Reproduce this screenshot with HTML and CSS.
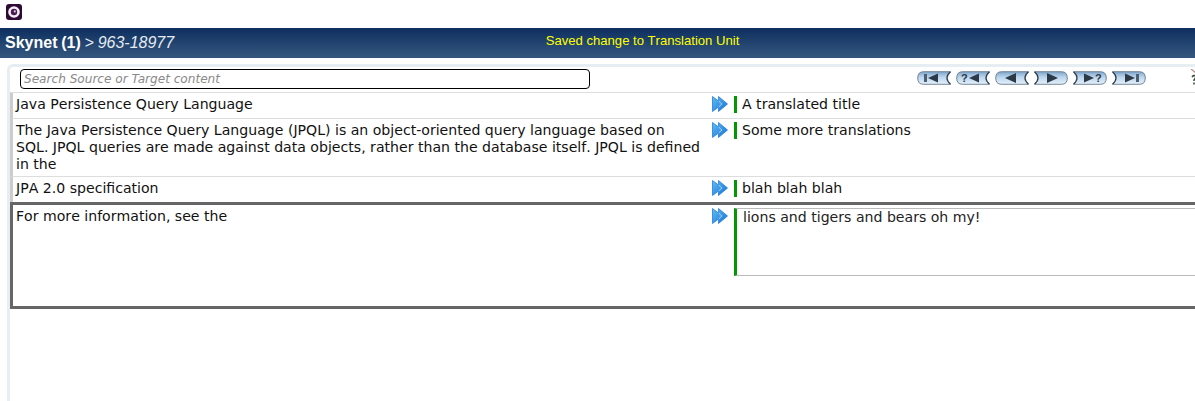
FILE: index.html
```html
<!DOCTYPE html>
<html lang="en">
<head>
<meta charset="utf-8">
<title>Skynet (1) &gt; 963-18977</title>
<link rel="stylesheet" href="styles.css">
</head>
<body>
<svg width="0" height="0" class="defs">
  <defs>
    <linearGradient id="pill" x1="0" y1="0" x2="0" y2="1">
      <stop offset="0" stop-color="#7fa6cb"/>
      <stop offset=".45" stop-color="#bcd6ee"/>
      <stop offset="1" stop-color="#e4f0fb"/>
    </linearGradient>
    <linearGradient id="arrow" x1="0" y1="0" x2="1" y2="1">
      <stop offset="0" stop-color="#63bcf4"/>
      <stop offset="1" stop-color="#1670d2"/>
    </linearGradient>
    <symbol id="pill-left" viewBox="0 0 34 14">
      <path d="M6.500 .7H33.500Q26.500 7 33.500 13.300H6.500Q.7 13.300 .7 7T6.500 .7Z" fill="url(#pill)"/>
      <path d="M33.500 .7H6.500Q.7 .7 .7 7T6.500 13.300H33.500" fill="none" stroke="#5a6c7e" stroke-width=".8"/>
      <path d="M33.500 .8Q26.500 7 33.500 13.200" fill="none" stroke="#2f3d4b" stroke-width="1.300"/>
    </symbol>
    <symbol id="pill-right" viewBox="0 0 34 14">
      <path d="M.5 .7H27.500Q33.300 .7 33.300 7T27.500 13.300H.5Q7.500 7 .5 .7Z" fill="url(#pill)"/>
      <path d="M.5 .7H27.500Q33.300 .7 33.300 7T27.500 13.300H.5" fill="none" stroke="#5a6c7e" stroke-width=".8"/>
      <path d="M.5 .8Q7.500 7 .5 13.200" fill="none" stroke="#2f3d4b" stroke-width="1.300"/>
    </symbol>
    <symbol id="copy-arrow" viewBox="0 0 16 16">
      <path d="M.5 .5 6.500 5V.5L15.500 8 6.500 15.500V11L.5 15.500Z" fill="url(#arrow)" stroke="#1f7fdc" stroke-width=".8"/>
      <path d="M6.500 5 10 8 6.500 11" fill="none" stroke="#a8dcfa" stroke-width=".9"/>
    </symbol>
  </defs>
</svg>

<div class="topbar">
  <svg class="logo" width="16" height="16" viewBox="0 0 16 16">
    <rect width="16" height="16" rx="3" fill="#2d0a35"/>
    <circle cx="8" cy="8" r="5.800" fill="#f3eef3"/>
    <circle cx="8" cy="8" r="3.200" fill="#4b1a55"/>
    <circle cx="8.800" cy="7.400" r="1.100" fill="#d9c3dc"/>
  </svg>
</div>

<header class="titlebar">
  <div class="crumbs"><strong class="project">Skynet (1)</strong> <span class="sep">&gt;</span> <em class="doc">963-18977</em></div>
  <div class="notice">Saved change to Translation Unit</div>
</header>

<main class="panel">
  <div class="toolbar">
    <input class="search" type="text" placeholder="Search Source or Target content">
    <nav class="pager">
      <svg class="nav" width="34" height="14" viewBox="0 0 34 14"><use href="#pill-left" width="34" height="14"/><rect x="7" y="3" width="3" height="8" fill="#4d5f70"/><path d="M11 7 21 2.500V11.500Z" fill="#2c3a48"/></svg>
      <svg class="nav" width="34" height="14" viewBox="0 0 34 14"><use href="#pill-left" width="34" height="14"/><text x="5" y="11" class="q">?</text><path d="M13 7 23 2.500V11.500Z" fill="#2c3a48"/></svg>
      <svg class="nav" width="34" height="14" viewBox="0 0 34 14"><use href="#pill-left" width="34" height="14"/><path d="M10 7 21 2V12Z" fill="#2c3a48"/></svg>
      <svg class="nav" width="34" height="14" viewBox="0 0 34 14"><use href="#pill-right" width="34" height="14"/><path d="M24 7 13 2V12Z" fill="#2c3a48"/></svg>
      <svg class="nav" width="34" height="14" viewBox="0 0 34 14"><use href="#pill-right" width="34" height="14"/><path d="M21 7 11 2.500V11.500Z" fill="#2c3a48"/><text x="22" y="11" class="q">?</text></svg>
      <svg class="nav" width="34" height="14" viewBox="0 0 34 14"><use href="#pill-right" width="34" height="14"/><path d="M23 7 13 2.500V11.500Z" fill="#2c3a48"/><rect x="24" y="3" width="3" height="8" fill="#4d5f70"/></svg>
    </nav>
    <svg class="broken" width="5" height="16" viewBox="0 0 5 16">
      <path d="M0 0 5 4" stroke="#b08a8a" stroke-width="1.200"/>
      <path d="M1 8Q3 5.500 4.500 7V9L3 11V12M3 13.500V15.500" fill="none" stroke="#3a4a3a" stroke-width="1.500"/>
    </svg>
  </div>

  <div class="rows">
    <div class="row">
      <div class="source">Java Persistence Query Language</div>
      <svg class="copy" width="16" height="16"><use href="#copy-arrow"/></svg>
      <div class="target">A translated title</div>
    </div>
    <div class="row">
      <div class="source">The Java Persistence Query Language (JPQL) is an object-oriented query language based on<br>SQL. JPQL queries are made against data objects, rather than the database itself. JPQL is defined<br>in the</div>
      <svg class="copy" width="16" height="16"><use href="#copy-arrow"/></svg>
      <div class="target">Some more translations</div>
    </div>
    <div class="row">
      <div class="source">JPA 2.0 specification</div>
      <svg class="copy" width="16" height="16"><use href="#copy-arrow"/></svg>
      <div class="target">blah blah blah</div>
    </div>
    <div class="row active">
      <div class="source">For more information, see the</div>
      <svg class="copy" width="16" height="16"><use href="#copy-arrow"/></svg>
      <textarea class="editor">lions and tigers and bears oh my!</textarea>
    </div>
  </div>
</main>
</body>
</html>
```
FILE: styles.css
```css
html, body {
  margin: 0;
  height: 401px;
  overflow: hidden;
  background: #fff;
}

body {
  font-family: "DejaVu Sans", sans-serif;
  font-size: 14.1px;
  font-kerning: none;
  color: #111;
}

.defs {
  display: block;
  height: 0;
}

.topbar {
  height: 28px;
  padding: 4px 0 0 6px;
  box-sizing: border-box;
}

.logo {
  display: block;
}

.titlebar {
  height: 30px;
  background: linear-gradient(#0e2f5f, #35587f);
  display: grid;
  grid-template-columns: 1fr;
  color: #fff;
  font-family: "Liberation Sans", Arial, sans-serif;
}

.crumbs, .notice {
  grid-area: 1 / 1;
}

.crumbs {
  padding: 5px 0 0 5px;
  font-size: 16px;
  line-height: 19px;
  word-spacing: -.7px;
}

.project {
  font-weight: bold;
}

.sep, .doc {
  color: #e6ebf2;
  font-style: italic;
}

.notice {
  padding: 5px 0 0 90px;
  text-align: center;
  font-size: 13.1px;
  line-height: 16px;
  color: #ffff00;
}

.panel {
  width: 1200px;
  height: 340px;
  margin: 6px 0 0 7px;
  box-sizing: border-box;
  border: solid #e6edf3;
  border-width: 3px 0 0 3px;
  border-top-left-radius: 6px;
}

.toolbar {
  display: flex;
  align-items: center;
  height: 25px;
  box-sizing: border-box;
  padding: 0 0 1px 10px;
}

.search {
  width: 570px;
  height: 20px;
  box-sizing: border-box;
  margin: 0;
  padding: 0 3px;
  border: 1px solid #000;
  border-radius: 4px;
  font-family: "DejaVu Sans", sans-serif;
  font-style: italic;
  font-size: 12.100px;
  outline: none;
}

.search::placeholder {
  color: #8a8a8a;
}

.pager {
  display: flex;
  gap: 5px;
  margin: 0 0 2px 327px;
}

.nav {
  display: block;
}

.q {
  font-family: "Liberation Sans", sans-serif;
  font-size: 11px;
  font-weight: bold;
  fill: #2c3a48;
}

.broken {
  display: block;
  flex: none;
  margin: 0 0 4px 45px;
}

.rows {
  border-top: 1px solid #ddd;
}

.row {
  display: grid;
  grid-template-columns: 699px 22px 1fr;
  align-items: start;
  border-left: 3px solid #ccc;
  border-bottom: 1px solid #ddd;
  padding: 3px 0;
  line-height: 17px;
  box-sizing: content-box;
}

.source {
  padding: 0 5px 0 3px;
}

.target {
  min-height: 17px;
  margin-bottom: 2px;
  border-left: 3px solid #090;
  padding-left: 5px;
}

.copy {
  display: block;
}

.row.active {
  height: 98px;
  margin-top: -1px;
  border: 3px solid #666;
  padding: 3px 0 0;
}

.editor {
  display: block;
  width: 470px;
  height: 68px;
  margin: 0;
  box-sizing: border-box;
  border: 1px solid #bbb;
  border-left: 3px solid #090;
  border-right: 0;
  padding: 0 0 0 6px;
  font: 14.1px/17px "DejaVu Sans", sans-serif;
  font-kerning: none;
  color: #222;
  resize: none;
  outline: none;
  overflow: hidden;
}
```
